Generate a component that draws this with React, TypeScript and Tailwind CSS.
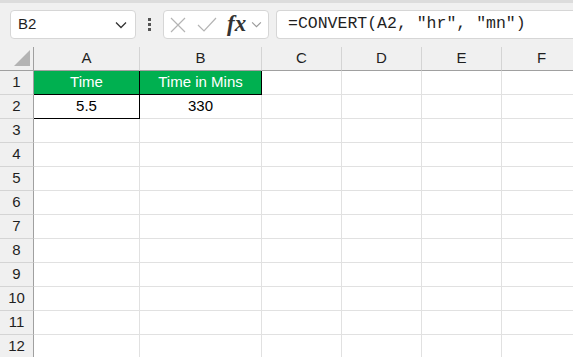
import React from "react";

const cols = [
  { key: "A", w: "w-[106px]" },
  { key: "B", w: "w-[122px]" },
  { key: "C", w: "w-[80px]" },
  { key: "D", w: "w-[80px]" },
  { key: "E", w: "w-[80px]" },
  { key: "F", w: "w-[80px]" },
];

const rows = Array.from({ length: 12 }, (_, i) => i + 1);

const cellText: Record<string, string> = {
  A1: "Time",
  B1: "Time in Mins",
  A2: "5.5",
  B2: "330",
};

const Chevron: React.FC<{ className?: string }> = ({ className }) => (
  <svg viewBox="0 0 12 8" className={className} fill="none" stroke="currentColor" strokeWidth="1.3">
    <path d="M1 1.5l5 5 5-5" />
  </svg>
);

const App: React.FC = () => {
  return (
    <div
      className="w-[573px] h-[357px] overflow-hidden bg-white text-black"
      style={{ fontFamily: '"Liberation Sans", Arial, sans-serif' }}
    >
      {/* formula bar */}
      <div className="h-[47px] bg-[#f0f0f0] border-t-[3px] border-[#dcdcdc] flex items-start pt-[7px] pl-[10px]">
        <div className="w-[126px] shrink-0 h-[29px] bg-white border border-[#d6d6d6] rounded-[4px] flex items-center pl-[7px] pr-[8px] justify-between">
          <span className="text-[15px] text-[#1f1f1f]">B2</span>
          <Chevron className="w-[12px] h-[8px] text-[#333]" />
        </div>
        <div className="w-[27px] shrink-0 h-[29px] flex flex-col items-center justify-center gap-[2px]">
          <span className="w-[3px] h-[3px] bg-[#555]" />
          <span className="w-[3px] h-[3px] bg-[#555]" />
          <span className="w-[3px] h-[3px] bg-[#555]" />
        </div>
        <div className="w-[106px] shrink-0 h-[29px] bg-white border border-[#d6d6d6] rounded-[4px] flex items-center pl-[6px]">
          <svg viewBox="0 0 16 16" className="w-[16px] h-[16px] text-[#b4b4b4]" fill="none" stroke="currentColor" strokeWidth="1.2">
            <path d="M1 1l14 14M15 1L1 15" />
          </svg>
          <svg viewBox="0 0 20 16" className="ml-[11px] w-[20px] h-[16px] text-[#b4b4b4]" fill="none" stroke="currentColor" strokeWidth="1.2">
            <path d="M1 8l6 6L19 1" />
          </svg>
          <span
            className="ml-[10px] text-[23px] italic font-bold leading-none text-[#333] -mt-[2px]"
            style={{ fontFamily: '"Liberation Serif", "Times New Roman", serif' }}
          >
            fx
          </span>
          <Chevron className="ml-[5px] w-[11px] h-[7px] text-[#999]" />
        </div>
        <div className="ml-[7px] flex-1 h-[29px] bg-white border border-[#d6d6d6] border-r-0 rounded-l-[4px] flex items-center pl-[11px]">
          <span
            className="text-[16.5px] text-[#1f1f1f] whitespace-pre"
            style={{ fontFamily: '"Liberation Mono", "Courier New", monospace' }}
          >
            =CONVERT(A2, "hr", "mn")
          </span>
        </div>
      </div>

      {/* column headers */}
      <div className="flex h-[24px] bg-[#f0f0f0]">
        <div className="w-[34px] shrink-0 h-full border-r border-b border-[#a0a0a0] flex items-end justify-end pr-[3px] pb-[4px]">
          <svg viewBox="0 0 16 16" className="w-[16px] h-[16px]">
            <path d="M16 0V16H0Z" fill="#b3b3b3" />
          </svg>
        </div>
        {cols.map((c) => (
          <div
            key={c.key}
            className={`${c.w} shrink-0 h-full border-r border-[#d4d4d4] border-b border-b-[#a0a0a0] flex items-center justify-center text-[15px] text-[#1f1f1f]`}
          >
            {c.key}
          </div>
        ))}
      </div>

      {/* rows */}
      {rows.map((r) => (
        <div key={r} className="flex h-[24px]">
          <div className="w-[34px] shrink-0 h-full bg-[#f0f0f0] border-r border-[#a0a0a0] border-b border-b-[#d4d4d4] flex items-center justify-center text-[15px] text-[#1f1f1f]">
            {r}
          </div>
          {cols.map((c) => {
            const id = `${c.key}${r}`;
            const head = r === 1 && (c.key === "A" || c.key === "B");
            const black = head || id === "A2";
            return (
              <div
                key={id}
                className={[
                  c.w,
                  "shrink-0 h-full border-r border-b flex items-center justify-center text-[15px]",
                  head ? "bg-[#00b050] text-white" : "text-black",
                  black ? "border-r-black border-b-black" : "border-r-[#e1e1e1] border-b-[#e1e1e1]",
                ].join(" ")}
              >
                {cellText[id] ?? ""}
              </div>
            );
          })}
        </div>
      ))}
    </div>
  );
};

export default App;
